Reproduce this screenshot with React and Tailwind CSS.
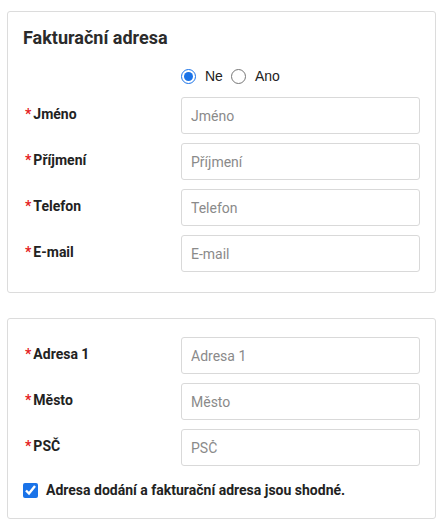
import React, { useState } from 'react';

const billingFields = ['Jméno', 'Příjmení', 'Telefon', 'E-mail'];
const addressFields = ['Adresa 1', 'Město', 'PSČ'];

const FieldRow = ({ label }) => (
    <div className="flex h-[37px]">
        <div className="w-[158px] pl-[2px] pt-[7px] leading-[20px] text-[14px] font-bold text-[#222]">
            <span className="text-[#e41b23] mr-[2px]">*</span>
            {label}
        </div>
        <input
            type="text"
            placeholder={label}
            className="flex-1 h-[37px] border border-[#d9d9d9] rounded-[3px] px-[9px] text-[14px] text-[#333] placeholder:text-[#8a8a8a] outline-none"
        />
    </div>
);

const App = () => {
    const [hasCompany, setHasCompany] = useState('ne');
    const [same, setSame] = useState(true);

    return (
        <div className="pt-[11px] pl-[7px] pb-[12px]" style={{ fontFamily: 'Roboto, "Noto Sans", sans-serif' }}>
            {/* Billing address card */}
            <div className="w-[429px] border border-[#dcdcdc] rounded-[3px] pt-[15px] px-[15px] pb-[20px]">
                <h2 className="h-[22px] leading-[22px] text-[18px] font-bold text-[#2b2b2b]">
                    Fakturační adresa
                </h2>

                <div className="mt-[19px] h-[16px] flex items-center pl-[158px] text-[14px] text-[#222]" style={{ fontFamily: '"Liberation Sans", Arial, sans-serif' }}>
                    <label className="flex items-center">
                        <input
                            type="radio"
                            name="company"
                            checked={hasCompany === 'ne'}
                            onChange={() => setHasCompany('ne')}
                            className="w-[15px] h-[15px] m-0 accent-[#1a73e8]"
                        />
                        <span className="ml-[9px]">Ne</span>
                    </label>
                    <label className="flex items-center ml-[8px]">
                        <input
                            type="radio"
                            name="company"
                            checked={hasCompany === 'ano'}
                            onChange={() => setHasCompany('ano')}
                            className="w-[15px] h-[15px] m-0 accent-[#1a73e8]"
                        />
                        <span className="ml-[9px]">Ano</span>
                    </label>
                </div>

                <div className="mt-[13px] flex flex-col gap-[9px]">
                    {billingFields.map(f => <FieldRow key={f} label={f} />)}
                </div>
            </div>

            {/* Address card */}
            <div className="mt-[25px] w-[429px] border border-[#dcdcdc] rounded-[3px] pt-[18px] px-[15px] pb-[18px]">
                <div className="flex flex-col gap-[9px]">
                    {addressFields.map(f => <FieldRow key={f} label={f} />)}
                </div>

                <label className="mt-[14px] h-[20px] flex items-center text-[14px] font-bold text-[#222]">
                    <input
                        type="checkbox"
                        checked={same}
                        onChange={e => setSame(e.target.checked)}
                        className="w-[15px] h-[15px] m-0 accent-[#1a73e8]"
                    />
                    <span className="ml-[8px]">Adresa dodání a fakturační adresa jsou shodné.</span>
                </label>
            </div>
        </div>
    );
};

export default App;
